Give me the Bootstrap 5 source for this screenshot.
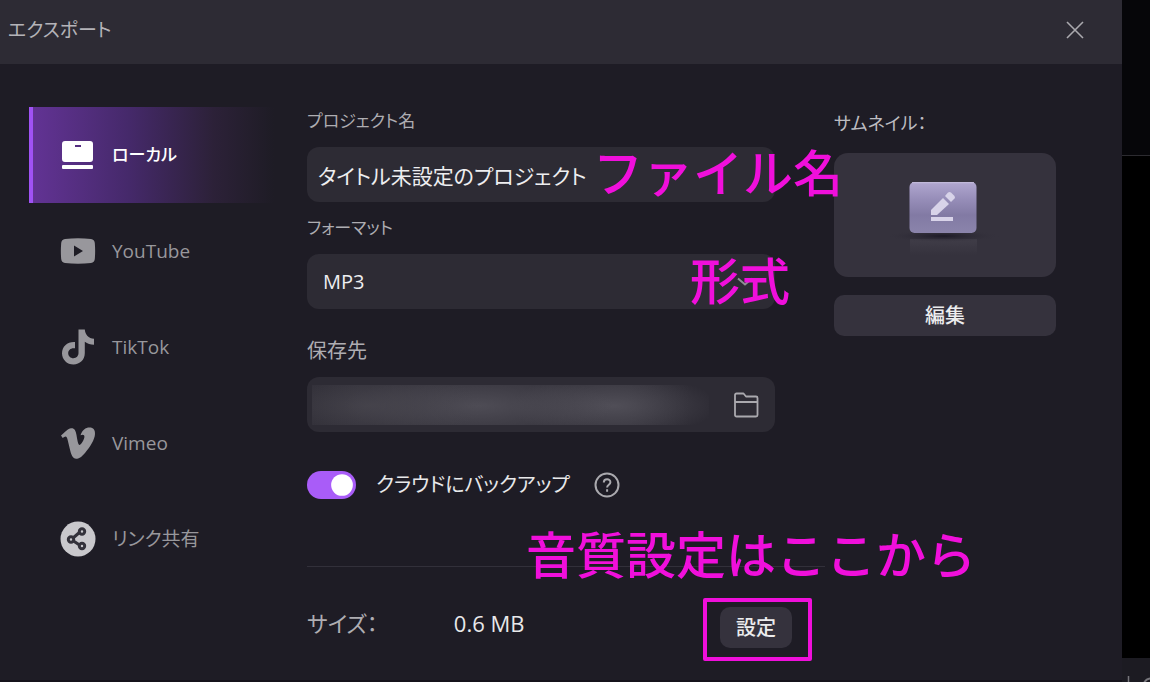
<!DOCTYPE html>
<html lang="ja">
<head>
<meta charset="utf-8">
<meta name="viewport" content="width=device-width, initial-scale=1">
<title>エクスポート</title>
<link href="https://cdn.jsdelivr.net/npm/bootstrap@5.3.0/dist/css/bootstrap.min.css" rel="stylesheet">
<style>
  body { background: #1e1c25; color: #e8e8ea; font-family: "Open Sans", "Noto Sans CJK JP", sans-serif; font-size: 17px; line-height: 28px; font-feature-settings: "palt"; }
  .dialog { border-bottom: 2px solid #15131b; }
  .title-bar { background: #2d2b34; height: 64px; padding: 0 34px 4px 8px; color: #b4b3b8; font-size: 19px; }
  .icon-btn { background: none; border: 0; padding: 0; line-height: 0; color: #aaa9ae; }
  .content { padding: 43px 66px 0 29px; gap: 33px; }
  .targets { width: 245px; }
  .targets .nav-link { height: 96px; padding: 0 0 0 27px; gap: 16px; color: #98979c; border-left: 4px solid transparent; border-radius: 0; font-size: 19px; }
  .targets .nav-link svg { width: 36px; height: 36px; flex: none; }
  .targets .nav-link.active { color: #fff; border-left-color: #a052f5; background: linear-gradient(90deg, #623394, #45296a 40%, #2c2138 75%, #1e1c25); font-weight: 500; font-size: 17px; }
  .upper { gap: 59px; }
  .field-label { display: block; margin-bottom: 12px; color: #aeadb2; }
  .label-large { font-size: 20px; }
  .field { height: 55px; background-color: #2d2b34; color: #eeeef0; border: 0; border-radius: 12px; font-size: 21px; font-feature-settings: inherit; }
  .field:focus { background-color: #2d2b34; color: #eeeef0; box-shadow: none; }
  .name-field { padding: 0 11px; }
  .format-field { padding: 0 16px; font-size: 20px; background-image: url("data:image/svg+xml,%3Csvg xmlns='http://www.w3.org/2000/svg' viewBox='0 0 16 10'%3E%3Cpath d='M1 1.5l7 6 7-6' fill='none' stroke='%238f8e94' stroke-width='2'/%3E%3C/svg%3E"); background-size: 16px 10px; background-position: right 22px center; }
  .path-field { padding: 0 16px 0 5px; }
  .path-text { height: 40px; border: 0; min-width: 0; color: transparent; background:
      radial-gradient(ellipse 30% 80% at 14% 52%, #4a4850aa, transparent),
      radial-gradient(ellipse 34% 80% at 42% 52%, #54525bcc, transparent),
      radial-gradient(ellipse 26% 80% at 76% 52%, #57555ecc, transparent),
      linear-gradient(90deg, #2f2d36, #35333c 12%, #35333c 80%, #2d2b34 95%); }
  .switch-row { margin-top: 39px; gap: 20px; font-size: 20px; }
  .switch-row .form-check-input { width: 49px; height: 28px; margin: 0; border: 0; background-color: #a95cf8; background-size: 28px; background-image: url("data:image/svg+xml,%3Csvg xmlns='http://www.w3.org/2000/svg' viewBox='-4 -4 8 8'%3E%3Ccircle r='3.1' fill='%23fff'/%3E%3C/svg%3E"); }
  .thumb-col { width: 222px; padding-top: 2px; }
  .thumb-label { color: #bdbcc1; font-size: 18px; }
  .thumb { height: 124px; margin: 16px 0 18px; background: #35323d; border-radius: 14px; }
  .dark-btn { height: 41px; background: #35323d; color: #ececee; border: 0; border-radius: 10px; font-weight: 500; font-size: 20px; padding: 0 16px; }
  .dark-btn:hover { background: #403d49; color: #fff; }
  .summary { margin: 67px 231px 0 0; border-top: 1px solid #32303a; padding: 31px 13px 0 0; }
  .summary dl { gap: 76px; padding-top: 11px; font-size: 22px; }
  .summary dt { color: #aeadb2; font-weight: 400; }
  .framed { border: 4px solid #f00fdb; border-radius: 2px; padding: 5px 16px 9px 13px; }
  .note { color: #f00fdb; font-family: "Noto Sans CJK JP", sans-serif; font-weight: 500; font-size: 50px; line-height: 60px; font-feature-settings: normal; white-space: nowrap; pointer-events: none; z-index: 2; }
  .note-name { right: -68px; top: -7px; }
  .note-format { right: -15px; top: -6px; }
  .note-quality { left: 219px; top: -45px; }
  .backdrop-strip { width: 28px; background: #000; }
  .strip-top { height: 156px; background: #060609; border-bottom: 1px solid #2c2b30; }
  .strip-foot { height: 24px; background: #1c1b22; }
</style>
</head>
<body>
<div class="d-flex min-vh-100 overflow-hidden">
  <main class="dialog flex-grow-1 d-flex flex-column">
    <header class="title-bar d-flex align-items-center justify-content-between">
      <span>エクスポート</span>
      <button class="icon-btn" type="button" aria-label="閉じる">
        <svg width="26" height="26" viewBox="0 0 26 26" fill="none" stroke="currentColor" stroke-width="1.6"><path d="M5 5l16 16M21 5L5 21"/></svg>
      </button>
    </header>

    <div class="content d-flex">
      <nav class="targets nav flex-column flex-shrink-0">
        <a class="nav-link active d-flex align-items-center" href="#">
          <svg viewBox="0 0 36 36" fill="currentColor"><path fill-rule="evenodd" d="M5 4h25a3 3 0 0 1 3 3v15a3 3 0 0 1-3 3H5a3 3 0 0 1-3-3V7a3 3 0 0 1 3-3zm10 4v2h6V8z"/><rect x="2" y="28" width="31" height="4" rx="1"/></svg>
          ローカル</a>
        <a class="nav-link d-flex align-items-center" href="#">
          <svg viewBox="0 0 36 36" fill="currentColor"><path fill-rule="evenodd" d="M5 6Q18 4.500 31 6 34.500 6.500 34.800 10 35.500 18 34.800 26 34.500 29.500 31 30 18 31.500 5 30 1.500 29.500 1.200 26 .500 18 1.200 10 1.500 6.500 5 6zM14 12.500v11l9-5.500z"/></svg>
          YouTube</a>
        <a class="nav-link d-flex align-items-center" href="#">
          <svg viewBox="0 0 36 36" fill="currentColor"><path d="M18.500 0.500h6.300c.3 5 3.800 9 9.200 9.300v6c-3.500 0-6.500-1-9.200-3v11.300C24.800 31 19.800 35.500 13.500 35.500 7 35.500 2 30.500 2 24.200 2 17.500 7.500 12.500 15 13v6.300c-4-.8-6.800 1.700-6.800 4.900 0 2.800 2.300 5 5.200 5 3.100 0 5.100-2.200 5.100-5.400z"/></svg>
          TikTok</a>
        <a class="nav-link d-flex align-items-center" href="#">
          <svg viewBox="0 0 36 36" fill="currentColor"><path d="M1 10.500C5 7 8 3.500 11 3.200c3.500-.3 4.700 2.500 5.400 6.300.8 4.600 1.600 10.500 3.200 10.500 1.200 0 4.700-5.500 4.800-8 .2-2.400-1.500-2.800-3.900-1.800C22.300 5 25.500 2.500 29.500 2.500c4 0 5.700 2.500 5.500 6.500-.3 5.500-4.500 12.500-9.800 18.700-3.800 4.500-6.400 6-9 6-3.500 0-4.800-3.700-6-8.200L7.800 15.500C7.200 13 6.600 11.500 5.500 11.500c-.6 0-1.800.9-2.800 1.500z"/></svg>
          Vimeo</a>
        <a class="nav-link d-flex align-items-center" href="#">
          <svg viewBox="0 0 36 36"><circle cx="18" cy="18" r="17.500" fill="#c9c8cc"/><g fill="none" stroke="#33313a" stroke-width="3"><path d="M13 17l7-6M13.500 20l6 4" /><circle cx="11" cy="18.500" r="2.700"/><circle cx="22" cy="10.500" r="2.700"/><circle cx="22" cy="25" r="2.700"/></g></svg>
          リンク共有</a>
      </nav>

      <form class="flex-grow-1">
        <div class="upper d-flex">
          <div class="flex-grow-1">
            <label class="field-label" for="project">プロジェクト名</label>
            <div class="position-relative">
              <input class="form-control field name-field" id="project" type="text" value="タイトル未設定のプロジェクト">
              <span class="note note-name position-absolute">ファイル名</span>
            </div>
            <label class="field-label pt-1 mt-2" for="format">フォーマット</label>
            <div class="position-relative">
              <select class="form-select field format-field" id="format"><option>MP3</option></select>
              <span class="note note-format position-absolute">形式</span>
            </div>
            <label class="field-label label-large mt-4 pt-1" for="folder">保存先</label>
            <div class="field path-field d-flex align-items-center">
              <input class="path-text flex-grow-1" id="folder" type="text" readonly>
              <button class="icon-btn ms-4" type="button" aria-label="フォルダーを選択">
                <svg width="26" height="26" viewBox="0 0 26 26" fill="none" stroke="currentColor" stroke-width="1.800" stroke-linejoin="round"><path d="M3.500 1.500h7l2.500 3h10a1.500 1.500 0 0 1 1.500 1.500v17a1.500 1.500 0 0 1-1.500 1.500h-19.500a1.500 1.500 0 0 1-1.500-1.500v-20a1.500 1.500 0 0 1 1.500-1.500zM2 10h22.500"/></svg>
              </button>
            </div>
            <div class="switch-row d-flex align-items-center form-switch p-0">
              <input class="form-check-input flex-shrink-0" type="checkbox" role="switch" id="backup" checked>
              <label for="backup">クラウドにバックアップ</label>
              <button class="icon-btn ms-1" type="button" aria-label="ヘルプ">
                <svg width="26" height="26" viewBox="0 0 26 26" fill="none" stroke="currentColor" stroke-width="2"><circle cx="13" cy="13" r="11.500"/><path d="M9.800 10.500c0-4.200 6.600-4.200 6.600-.3 0 2.500-3.300 2.600-3.300 5.300M13.100 17.300v2.400"/></svg>
              </button>
            </div>
          </div>

          <div class="thumb-col flex-shrink-0">
            <div class="thumb-label">サムネイル：</div>
            <div class="thumb d-flex justify-content-center">
              <svg width="130" height="124" viewBox="1 0 130 124" aria-hidden="true">
                <defs>
                  <linearGradient id="face" x2="0" y2="1"><stop offset="0" stop-color="#b1a7d0"/><stop offset=".3" stop-color="#9990bb"/><stop offset=".65" stop-color="#827aa4"/><stop offset="1" stop-color="#8b84ab"/></linearGradient>
                  <radialGradient id="shade"><stop offset="0" stop-color="#1c1926"/><stop offset="1" stop-color="#35323d" stop-opacity="0"/></radialGradient>
                  <linearGradient id="mirror" x2="0" y2="1"><stop offset="0" stop-color="#403d48"/><stop offset="1" stop-color="#35323d"/></linearGradient>
                </defs>
                <path d="M31 86h67v16H31z" fill="url(#mirror)"/>
                <ellipse cx="64" cy="83" rx="58" ry="6" fill="url(#shade)"/>
                <rect x="30.500" y="29" width="67" height="51" rx="5" fill="url(#face)"/>
                <path d="M33 29.700h62" stroke="#c6bedd"/>
                <g fill="#d8d3e9"><path d="M52 57l12-12 6 6-12 11h-6z"/><path d="M66 43l3-3.500q1.500-1 3 0l3.500 3.500q1 1.500 0 2.500L72 49z"/><rect x="52" y="64" width="22" height="4"/></g>
              </svg>
            </div>
            <button class="btn dark-btn w-100" type="button">編集</button>
          </div>
        </div>

        <div class="summary position-relative d-flex justify-content-between align-items-start">
          <span class="note note-quality position-absolute">音質設定はここから</span>
          <dl class="d-flex mb-0"><dt>サイズ：</dt><dd class="mb-0">0.6 MB</dd></dl>
          <div class="framed"><button class="btn dark-btn" type="button">設定</button></div>
        </div>
      </form>
    </div>
  </main>

  <aside class="backdrop-strip d-flex flex-column flex-shrink-0" aria-hidden="true">
    <div class="strip-top"></div>
    <div class="flex-grow-1"></div>
    <div class="strip-foot">
      <svg class="d-block" width="28" height="24" fill="none" stroke="#77767c" stroke-width="1.500"><path d="M6.500 18v6"/><path d="M22 25q3-6 10-4" stroke-width="2"/></svg>
    </div>
  </aside>
</div>
<script src="https://cdn.jsdelivr.net/npm/bootstrap@5.3.0/dist/js/bootstrap.bundle.min.js"></script>
</body>
</html>
